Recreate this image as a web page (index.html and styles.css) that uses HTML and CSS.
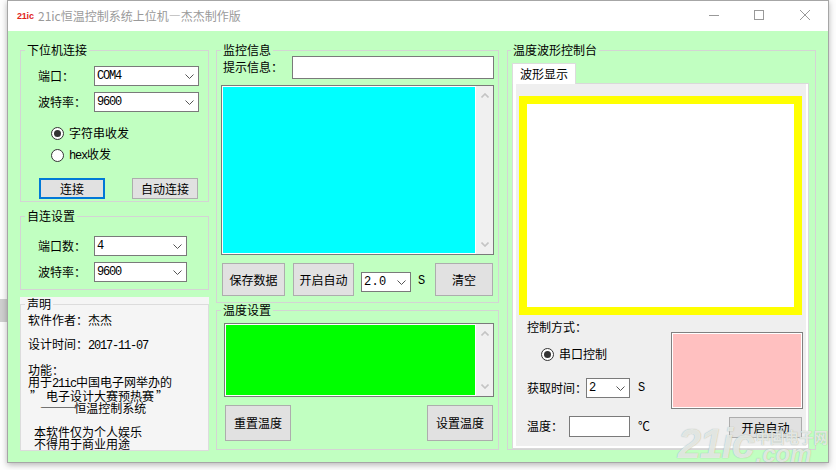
FILE: index.html
```html
<!DOCTYPE html>
<html lang="zh">
<head>
<meta charset="utf-8">
<title>21ic恒温控制系统上位机</title>
<link rel="stylesheet" href="styles.css">
</head>
<body>
<div class="desk-patch"></div>
<div class="window">
  <header class="titlebar">
    <span class="logo">21ic</span>
    <span class="title">21ic恒温控制系统上位机—杰杰制作版</span>
    <span class="win-btn win-min"><svg width="12" height="12" viewBox="0 0 12 12"><path d="M1 6.5h10" stroke="#999" fill="none"/></svg></span>
    <span class="win-btn win-max"><svg width="12" height="12" viewBox="0 0 12 12"><rect x="1.5" y="1.5" width="9" height="9" stroke="#999" fill="none"/></svg></span>
    <span class="win-btn win-close"><svg width="12" height="12" viewBox="0 0 12 12"><path d="M1 1l10 10M11 1L1 11" stroke="#999" fill="none"/></svg></span>
  </header>
  <main class="client">
    <section class="col col-left">
      <fieldset class="group g-conn">
        <legend>下位机连接</legend>
        <div class="row row-first"><span class="lbl">端口：</span><div class="combo c-wide"><span class="lat">COM4</span><svg class="chev" viewBox="0 0 9 5"><path d="M.5.5l4 4 4-4"/></svg></div></div>
        <div class="row row-next"><span class="lbl">波特率：</span><div class="combo c-wide"><span class="lat">9600</span><svg class="chev" viewBox="0 0 9 5"><path d="M.5.5l4 4 4-4"/></svg></div></div>
        <div class="radio-row rr-first"><span class="radio on"></span><span>字符串收发</span></div>
        <div class="radio-row rr-next"><span class="radio"></span><span><span class="lat">hex</span>收发</span></div>
        <div class="btn-row"><button class="btn btn-focus">连接</button><button class="btn btn-auto">自动连接</button></div>
      </fieldset>
      <fieldset class="group g-auto">
        <legend>自连设置</legend>
        <div class="row row-auto"><span class="lbl">端口数：</span><div class="combo c-mid"><span class="lat">4</span><svg class="chev" viewBox="0 0 9 5"><path d="M.5.5l4 4 4-4"/></svg></div></div>
        <div class="row row-next"><span class="lbl">波特率：</span><div class="combo c-mid"><span class="lat">9600</span><svg class="chev" viewBox="0 0 9 5"><path d="M.5.5l4 4 4-4"/></svg></div></div>
      </fieldset>
      <div class="note-wrap">
        <fieldset class="group g-note">
          <legend>声明</legend>
          <div class="note">
            <div>软件作者：杰杰</div>
            <div class="blank"></div>
            <div>设计时间：<span class="lat">2017-11-07</span></div>
            <div class="blank"></div>
            <div>功能：</div>
            <div>用于<span class="lat">21ic</span>中国电子网举办的</div>
            <div class="in1">”<span class="in2">电子设计大赛预热赛</span>”</div>
            <div class="in3"><span class="dash">———</span>恒温控制系统</div>
            <div class="blank"></div>
            <div class="in4">本软件仅为个人娱乐</div>
            <div class="in4">不得用于商业用途</div>
          </div>
        </fieldset>
      </div>
    </section>

    <section class="col col-mid">
      <fieldset class="group g-mon">
        <legend>监控信息</legend>
        <div class="hint-row"><span class="hint-lbl">提示信息：</span><div class="input i-hint"></div></div>
        <div class="memo m-cyan">
          <div class="fill cyan"></div>
          <div class="sbar"><svg class="sb-ico" viewBox="0 0 8 5"><path d="M.5 4.5l3.5-3.5 3.5 3.5"/></svg><svg class="sb-ico" viewBox="0 0 8 5"><path d="M.5.5L4 4 7.5.5"/></svg></div>
        </div>
        <div class="mon-btns">
          <button class="btn b-save">保存数据</button>
          <button class="btn b-auto">开启自动</button>
          <div class="combo c-small"><span class="lat lat-wide">2.0</span><svg class="chev" viewBox="0 0 9 5"><path d="M.5.5l4 4 4-4"/></svg></div>
          <span class="lat unit-s">S</span>
          <button class="btn b-clear">清空</button>
        </div>
      </fieldset>
      <fieldset class="group g-temp">
        <legend>温度设置</legend>
        <div class="memo m-green">
          <div class="fill green"></div>
          <div class="sbar"><svg class="sb-ico" viewBox="0 0 8 5"><path d="M.5 4.5l3.5-3.5 3.5 3.5"/></svg><svg class="sb-ico" viewBox="0 0 8 5"><path d="M.5.5L4 4 7.5.5"/></svg></div>
        </div>
        <div class="temp-btns"><button class="btn b-temp">重置温度</button><button class="btn b-temp">设置温度</button></div>
      </fieldset>
    </section>

    <section class="col col-right">
      <fieldset class="group g-wave">
        <legend>温度波形控制台</legend>
        <div class="tab">波形显示</div>
        <div class="panel">
          <div class="panel-body">
            <div class="plot"></div>
            <div class="ctl">
              <div class="ctl-left">
                <div class="ctl-title">控制方式：</div>
                <div class="radio-row ctl-radio"><span class="radio on"></span><span>串口控制</span></div>
                <div class="ctl-time"><span>获取时间：</span><div class="combo c-time"><span class="lat">2</span><svg class="chev" viewBox="0 0 9 5"><path d="M.5.5l4 4 4-4"/></svg></div><span class="lat unit-t">S</span></div>
                <div class="ctl-temp"><span class="temp-lbl">温度：</span><div class="input i-temp"></div><span class="unit-c">℃</span></div>
              </div>
              <div class="ctl-right">
                <div class="pink-box"><div class="pink"></div></div>
                <button class="btn b-start">开启自动</button>
              </div>
            </div>
          </div>
        </div>
      </fieldset>
    </section>
  </main>
  <div class="watermark"><span class="wm-big">21ic</span><span class="wm-side"><span class="wm-cn">中国电子网</span><span class="wm-com">.com</span></span></div>
</div>
</body>
</html>
```
FILE: styles.css
```css
* { box-sizing: border-box; }
html, body { margin: 0; padding: 0; }
body {
  width: 836px;
  height: 470px;
  overflow: hidden;
  background: #fdfdfd;
  position: relative;
  font: 12px/14px "Noto Sans CJK SC", sans-serif;
  color: #000;
}
.desk-patch { position: absolute; left: 0; top: 299px; width: 7px; height: 23px; background: #cfcfcf; }
.window {
  position: absolute;
  left: 7px;
  top: 0;
  width: 822px;
  height: 463px;
  border: 1px solid #a6a6a6;
  box-shadow: 0 2px 6px rgba(0,0,0,.28);
  display: flex;
  flex-direction: column;
  background: #fff;
}
.titlebar { height: 30px; flex: none; display: flex; align-items: center; padding-left: 9px; background: #fff; }
.logo { width: 15px; font: bold 9px/10px "Liberation Sans", sans-serif; color: #e0241c; letter-spacing: -.2px; margin-right: 6px; white-space: nowrap; }
.title { font-size: 12px; color: #9a9a9a; flex: 1; white-space: nowrap; margin-top: -1px; }
.win-btn { display: flex; width: 12px; height: 12px; margin-top: -2px; }
.win-min { margin-right: 33px; }
.win-max { margin-right: 34px; }
.win-close { margin-right: 17px; }
.client {
  flex: 1;
  background: #c1ffc1;
  display: flex;
  gap: 7px;
  padding: 13px 12px 0;
}
.col { display: flex; flex-direction: column; }
.col-left { width: 189px; }
.col-mid { width: 283px; gap: 1px; }
.col-right { width: 309px; margin-left: 1px; }
.group { margin: 0; padding: 0; border: 1px solid #d4d4d4; min-width: 0; }
.group legend { margin-left: 4px; padding: 0 2px; font-size: 12px; line-height: 12px; height: 12px; }
.g-wave legend { margin-left: 3px; }
.lat { font-family: "Liberation Mono", monospace; font-size: 12px; letter-spacing: -1.2px; }
.lat-wide { letter-spacing: .3px; }

.g-conn { height: 158px; }
.g-auto { height: 80px; margin-top: 8px; }
.row { display: flex; align-items: center; padding-left: 17px; }
.row-first { margin-top: 10px; }
.row-next { margin-top: 6px; }
.row-auto { margin-top: 14px; }
.lbl { width: 56px; }
.combo {
  position: relative;
  height: 20px;
  background: #fff;
  border: 1px solid #7a7a7a;
  display: flex;
  align-items: center;
  padding-left: 2px;
}
.chev { position: absolute; right: 4px; top: 7px; width: 9px; height: 5px; fill: none; stroke: #555; }
.c-wide { width: 105px; }
.c-mid { width: 93px; }
.c-small { width: 50px; margin: 4px 0 0 7px; }
.c-time { width: 44px; margin-left: -1px; }

.radio-row { display: flex; align-items: center; gap: 5px; height: 14px; }
.rr-first { margin: 14px 0 0 30px; }
.rr-next { margin: 8px 0 0 30px; }
.radio {
  width: 13px;
  height: 13px;
  border: 1px solid #333;
  border-radius: 50%;
  background: #fff;
  display: flex;
  align-items: center;
  justify-content: center;
}
.radio.on::after { content: ""; width: 7px; height: 7px; border-radius: 50%; background: #333; }

.btn {
  margin: 0;
  padding: 0;
  background: #e1e1e1;
  border: 1px solid #adadad;
  font: 12px/14px "Noto Sans CJK SC", sans-serif;
  color: #000;
}
.btn-row { display: flex; gap: 27px; margin: 16px 0 0 18px; }
.btn-row .btn { width: 66px; height: 21px; }
.btn-focus { border: 2px solid #0078d7; }

.note-wrap { margin-top: 7px; height: 154px; background: #f5f5f5; padding-top: 1px; display: flex; }
.g-note { flex: 1; border-color: #dcdcdc; }
.note { margin: 4px 0 0 7px; line-height: 12px; white-space: nowrap; }
.blank { height: 12px; }
.in1 { padding-left: 2px; }
.in2 { padding: 0 2px 0 4px; }
.in3 { padding-left: 12px; }
.in4 { padding-left: 6px; }
.dash { letter-spacing: -1.7px; }

.hint-row { display: flex; align-items: center; padding-left: 6px; }
.hint-lbl { width: 69px; margin-top: -2px; }
.input { background: #fff; border: 1px solid #7a7a7a; }
.i-hint { width: 202px; height: 23px; }
.memo { display: flex; background: #fff; border: 1px solid #7a7a7a; padding: 1px 0 1px 1px; }
.m-cyan { width: 273px; height: 170px; margin: 6px 0 0 4px; }
.m-green { width: 270px; height: 74px; margin: 7px 0 0 7px; }
.fill { flex: 1; }
.cyan { background: #0ff; }
.green { background: #0f0; }
.sbar {
  width: 17px;
  margin: -1px 0 -1px 1px;
  background: #f0f0f0;
  display: flex;
  flex-direction: column;
  justify-content: space-between;
  align-items: center;
  padding: 7px 0;
}
.sb-ico { width: 8px; height: 5px; fill: none; stroke: #c4c4c4; stroke-width: 1.6; }
.mon-btns { display: flex; align-items: center; margin: 8px 0 0 5px; }
.mon-btns .btn { height: 33px; }
.g-mon { height: 259px; }
.b-save { width: 63px; }
.b-auto { width: 61px; margin-left: 8px; }
.unit-s { margin: 3px 0 0 7px; width: 6px; }
.b-clear { width: 58px; margin-left: 11px; }
.g-temp { height: 146px; }
.temp-btns { display: flex; justify-content: space-between; margin: 8px 0 0 8px; width: 268px; }
.b-temp { width: 66px; height: 36px; }

.g-wave { height: 406px; }
.tab { width: 64px; height: 21px; margin: 7px 0 0 4px; background: #fff; border: 1px solid #dcdcdc; border-bottom: 0; text-align: center; line-height: 20px; position: relative; z-index: 1; }
.panel { width: 297px; height: 366px; margin: -1px 0 0 4px; border: 1px solid #d9d9d9; background: #fff; padding: 0 2px 2px 3px; }
.panel-body { height: 100%; background: #efefef; padding: 12px 4px 0 3px; }
.plot { height: 219px; border: 8px solid #ff0; background: #fff; }
.ctl { display: flex; justify-content: space-between; margin-right: -1px; }
.ctl-left { padding-left: 8px; }
.ctl-title { margin-top: 5px; }
.ctl-radio { margin: 13px 0 0 14px; }
.ctl-time { display: flex; align-items: center; margin-top: 17px; height: 20px; }
.unit-t { margin-left: 8px; }
.ctl-temp { display: flex; align-items: center; margin-top: 18px; height: 21px; }
.temp-lbl { width: 42px; margin-top: -2px; }
.i-temp { width: 61px; height: 21px; }
.unit-c { margin: -2px 0 0 8px; }
.ctl-right { display: flex; flex-direction: column; align-items: flex-end; }
.pink-box { width: 132px; height: 77px; margin-top: 17px; background: #fff; border: 1px solid #808080; padding: 1px; }
.pink { height: 100%; background: #ffc0c0; }
.b-start { width: 73px; height: 21px; margin: 8px 1px 0 0; }

.watermark {
  position: absolute;
  right: 0;
  bottom: -1px;
  display: flex;
  align-items: flex-end;
  color: rgba(255,255,255,.72);
  pointer-events: none;
  text-shadow: 0 0 1px rgba(120,140,120,.75);
}
.wm-big { font: italic bold 42px/38px "Liberation Sans", sans-serif; letter-spacing: -1.5px; }
.wm-side { display: flex; flex-direction: column; margin-left: 2px; }
.wm-cn { font-size: 14.5px; line-height: 17px; font-weight: bold; white-space: nowrap; }
.wm-com { font: italic bold 24px/18px "Liberation Sans", sans-serif; }
```
